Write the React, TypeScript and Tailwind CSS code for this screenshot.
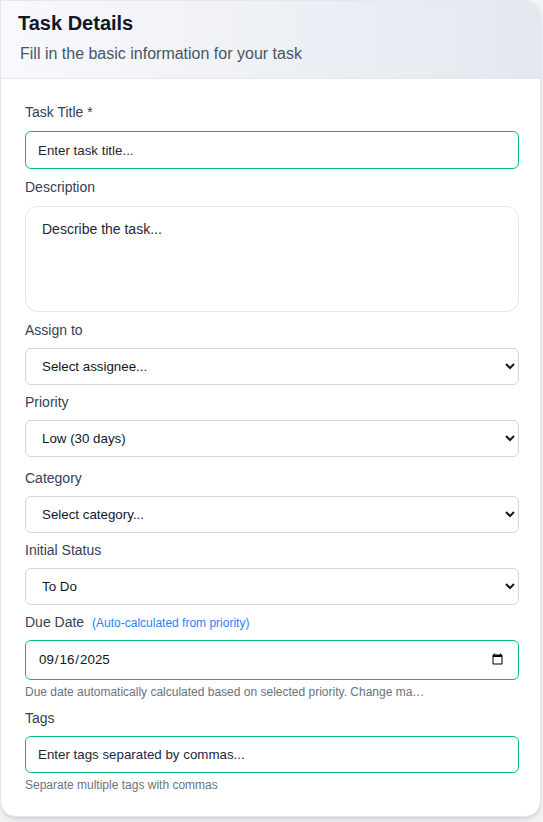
import React from 'react';

const labelCls = 'block text-sm leading-5 text-gray-700';
const greenInput =
  'block w-full rounded-md border border-emerald-500 bg-white px-3 text-[13.33px] text-gray-900 placeholder:text-gray-800 outline-none';
const selectCls =
  'block w-full h-[37px] rounded-md border border-gray-300 bg-white px-3 text-[13.33px] text-gray-900 outline-none';

export default function App() {
  return (
    <div className="min-h-screen bg-gray-100 pr-[2px] font-['Liberation_Sans',Arial,sans-serif]">
      <div className="overflow-hidden rounded-2xl rounded-tl-none border border-gray-200 bg-white shadow-md">
        {/* header */}
        <div className="h-[78px] border-b border-gray-200 bg-gradient-to-r from-[#f8f9fb] to-[#e3e8f0] pl-[17px] pt-2">
          <h2 className="text-xl font-bold leading-7 text-gray-900">Task Details</h2>
          <p className="ml-[2px] mt-[5px] text-base leading-6 text-gray-600">
            Fill in the basic information for your task
          </p>
        </div>

        <div className="flex flex-col pb-[23px] pl-6 pr-[21px] pt-[23px]">
          <label className={labelCls}>Task Title *</label>
          <input type="text" placeholder="Enter task title..." className={`${greenInput} mt-[9px] h-[38px]`} />

          <label className={`${labelCls} mt-2`}>Description</label>
          <textarea
            placeholder="Describe the task..."
            className="mt-[9px] block h-[106px] w-full resize-none rounded-xl border border-gray-200 bg-white px-4 py-3 text-sm text-gray-900 placeholder:text-gray-800 outline-none"
          />

          <label className={`${labelCls} mt-2`}>Assign to</label>
          <select className={`${selectCls} mt-2`} defaultValue="">
            <option value="">Select assignee...</option>
            <option value="1">Alex Morgan</option>
          </select>

          <label className={`${labelCls} mt-[7px]`}>Priority</label>
          <select className={`${selectCls} mt-2`} defaultValue="low">
            <option value="low">Low (30 days)</option>
            <option value="medium">Medium (14 days)</option>
            <option value="high">High (7 days)</option>
          </select>

          <label className={`${labelCls} mt-[11px]`}>Category</label>
          <select className={`${selectCls} mt-2`} defaultValue="">
            <option value="">Select category...</option>
            <option value="dev">Development</option>
          </select>

          <label className={`${labelCls} mt-[7px]`}>Initial Status</label>
          <select className={`${selectCls} mt-2`} defaultValue="todo">
            <option value="todo">To Do</option>
            <option value="progress">In Progress</option>
          </select>

          <label className={`${labelCls} mt-[7px]`}>
            Due Date <span className="ml-1 text-xs text-blue-500">(Auto-calculated from priority)</span>
          </label>
          <input type="date" defaultValue="2025-09-16" className={`${greenInput} mt-2 h-10`} />
          <p className="mt-1 text-xs leading-4 text-gray-500">
            Due date automatically calculated based on selected priority. Change ma…
          </p>

          <label className={`${labelCls} mt-2`}>Tags</label>
          <input
            type="text"
            placeholder="Enter tags separated by commas..."
            className={`${greenInput} mt-2 h-[37px]`}
          />
          <p className="mt-1 text-xs leading-4 text-gray-500">Separate multiple tags with commas</p>
        </div>
      </div>
    </div>
  );
}
